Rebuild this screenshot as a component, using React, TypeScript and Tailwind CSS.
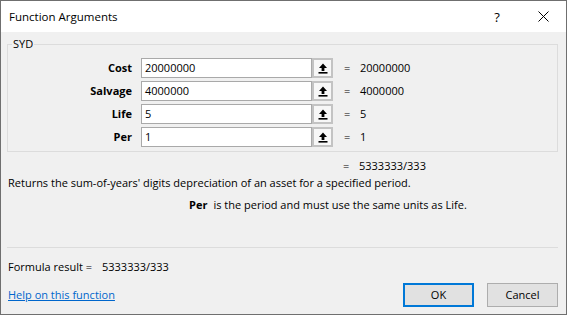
import React from "react";

const font = { fontFamily: '"Open Sans", "Noto Sans", sans-serif' };

function RefIcon() {
  return (
    <svg width="10" height="11" viewBox="0 0 10 11">
      <path d="M5 0.5 L1 5 H3.6 V8 H6.4 V5 H9 Z" fill="#000" />
      <rect x="0.5" y="9" width="9" height="1.6" fill="#000" />
    </svg>
  );
}

const args = [
  { name: "Cost", value: "20000000", result: "20000000" },
  { name: "Salvage", value: "4000000", result: "4000000" },
  { name: "Life", value: "5", result: "5" },
  { name: "Per", value: "1", result: "1" },
];

export default function App() {
  return (
    <div
      className="w-[567px] h-[315px] flex flex-col border border-[#6f6f6f] bg-[#f0f0f0] text-[11px] text-black leading-[16px] overflow-hidden"
      style={font}
    >
      {/* Title bar */}
      <div className="h-[31px] bg-white flex items-center pl-[8px] shrink-0">
        <span className="text-[11.5px]">Function Arguments</span>
        <span className="ml-auto w-[46px] h-[31px] flex items-center justify-center text-[13px]">?</span>
        <span className="w-[46px] h-[31px] flex items-center justify-center">
          <svg width="11" height="11" viewBox="0 0 11 11">
            <path d="M0.5 0.5 L10.5 10.5 M10.5 0.5 L0.5 10.5" stroke="#000" strokeWidth="1" />
          </svg>
        </span>
      </div>

      <div className="flex flex-col pl-[6px] pr-[8px] flex-1">
        {/* Group box */}
        <fieldset className="mt-[4px] border border-[#dcdcdc] pl-[4px] pr-0 pt-[6px] pb-[4px]">
          <legend className="px-[1px] leading-[16px]">SYD</legend>
          <div className="flex flex-col gap-[3px] -ml-[4px]">
            {args.map((a) => (
              <div key={a.name} className="flex items-center h-[20px]">
                <div className="w-[124px] text-right font-bold">{a.name}</div>
                <div className="ml-[9px] w-[171px] h-[20px] bg-white border border-[#a9a9a9] flex items-center pl-[3px]">
                  {a.value}
                </div>
                <div className="w-[21px] h-[20px] border-2 border-[#c3c3c3] bg-[#f7f7f7] flex items-center justify-center">
                  <RefIcon />
                </div>
                <div className="ml-[11px] w-[16px]">=</div>
                <div>{a.result}</div>
              </div>
            ))}
          </div>
        </fieldset>

        {/* Result */}
        <div className="flex mt-[6px] pl-[336px]">
          <span className="w-[16px]">=</span>
          <span>5333333/333</span>
        </div>
        <div className="mt-[1px] pl-[1px]">
          Returns the sum-of-years' digits depreciation of an asset for a specified period.
        </div>
        <div className="flex mt-[6px] pl-[182px] gap-[6px]">
          <span className="font-bold">Per</span>
          <span>is the period and must use the same units as Life.</span>
        </div>

        {/* Separator */}
        <div className="mt-auto border-t border-[#dcdcdc] mb-[11px]" />

        <div className="flex pl-[1px]">
          <span>Formula result =</span>
          <span className="ml-[10px]">5333333/333</span>
        </div>

        <div className="flex items-center mt-[8px] mb-[7px]">
          <span className="pl-[1px] text-[#0066cc] underline">Help on this function</span>
          <button className="ml-auto w-[71px] h-[24px] border-2 border-[#0078d7] bg-[#e1e1e1]">OK</button>
          <button className="ml-[13px] w-[71px] h-[24px] border border-[#adadad] bg-[#e1e1e1]">Cancel</button>
        </div>
      </div>
    </div>
  );
}
